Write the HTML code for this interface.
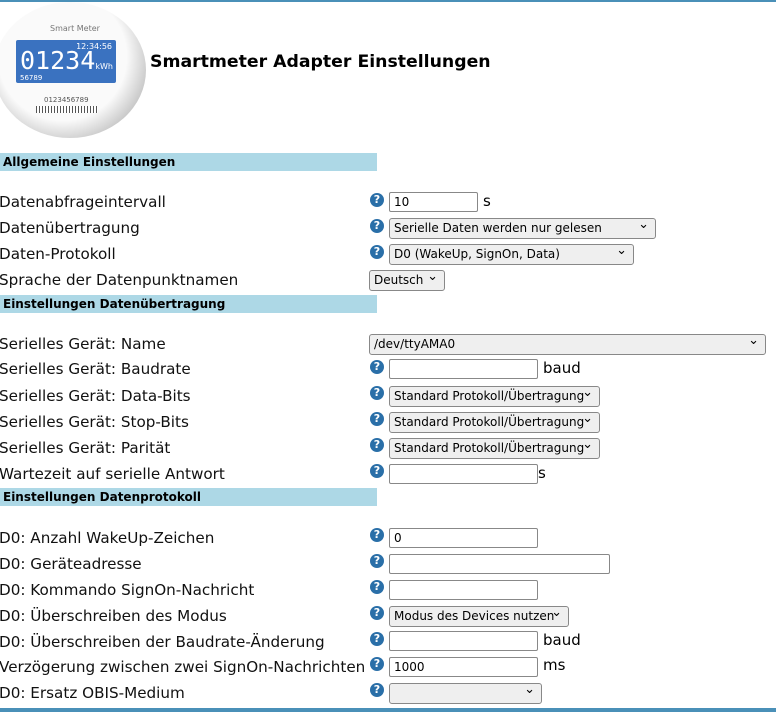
<!DOCTYPE html><html><head><meta charset="utf-8"><style>
body{margin:0;width:776px;height:712px;overflow:hidden;background:#fff;font-family:"DejaVu Sans","Liberation Sans",sans-serif;position:relative}
.t{position:absolute;left:0;right:0;height:2px;background:#4a90b8}
.h{position:absolute;left:0;width:377px;height:18px;background:#add8e6;font-weight:bold;font-size:12px;line-height:18px;padding-left:3px;box-sizing:border-box;color:#000}
.l{position:absolute;left:-1px;font-size:15.2px;color:#111;white-space:nowrap}
.q{position:absolute;left:370px;width:14px;height:14px;border-radius:50%;background:#2a6fa8;color:#fff;font-size:11px;font-weight:bold;text-align:center;line-height:14px}
.i{position:absolute;height:20px;border:1px solid #888;box-sizing:border-box;font-size:12px;line-height:18px;padding-left:4px;background:#fff;border-radius:2px}
.s{position:absolute;height:21px;border:1px solid #888;box-sizing:border-box;font-size:12px;line-height:19px;padding-left:4px;background:#efefef;border-radius:3px;white-space:nowrap}
.s:after{content:"⌄";position:absolute;right:6px;top:-4px;font-size:13px}
.u{position:absolute;font-size:15px}
</style></head><body>
<div class="t" style="top:0"></div><div class="t" style="top:708px;height:4px"></div>
<div style="position:absolute;left:-6px;top:2px;width:152px;height:136px;border-radius:50%;background:radial-gradient(circle at 45% 40%,#fafafa 55%,#c8c8c8 75%,#e8e8e8 85%,#aaa 100%)"></div>
<div style="position:absolute;left:16px;top:40px;width:100px;height:43px;background:#3a72c0;border-radius:2px;color:#fff"><span style="position:absolute;left:4px;top:6px;font-size:25px;font-family:'DejaVu Sans Mono',monospace">01234</span><span style="position:absolute;right:4px;top:2px;font-size:8px">12:34:56</span><span style="position:absolute;left:4px;bottom:1px;font-size:7px">56789</span><span style="position:absolute;right:3px;top:22px;font-size:8px">kWh</span></div>
<div style="position:absolute;left:50px;top:24px;font-size:8px;color:#777">Smart Meter</div>
<div style="position:absolute;left:44px;top:96px;font-size:7px;color:#555">0123456789</div>
<div style="position:absolute;left:36px;top:106px;width:62px;height:7px;background:repeating-linear-gradient(90deg,#555 0 1px,#fff 1px 3px)"></div>
<div style="position:absolute;left:150px;top:52px;font-size:17.3px;font-weight:bold">Smartmeter Adapter Einstellungen</div>
<div class="h" style="top:153px">Allgemeine Einstellungen</div>
<div class="h" style="top:295px">Einstellungen Datenübertragung</div>
<div class="h" style="top:488px">Einstellungen Datenprotokoll</div>

<div class="l" style="top:193px">Datenabfrageintervall</div><div class="q" style="top:193px">?</div><div class="i" style="left:389px;top:192px;width:89px">10</div><div class="u" style="left:483px;top:192px">s</div>
<div class="l" style="top:219px">Datenübertragung</div><div class="q" style="top:219px">?</div><div class="s" style="left:389px;top:218px;width:267px">Serielle Daten werden nur gelesen</div>
<div class="l" style="top:245px">Daten-Protokoll</div><div class="q" style="top:245px">?</div><div class="s" style="left:389px;top:244px;width:245px">D0 (WakeUp, SignOn, Data)</div>
<div class="l" style="top:271px">Sprache der Datenpunktnamen</div><div class="s" style="left:369px;top:270px;width:76px">Deutsch</div>

<div class="l" style="top:335px">Serielles Gerät: Name</div><div class="s" style="left:369px;top:334px;width:397px">/dev/ttyAMA0</div>
<div class="l" style="top:360px">Serielles Gerät: Baudrate</div><div class="q" style="top:360px">?</div><div class="i" style="left:389px;top:359px;width:149px"></div><div class="u" style="left:543px;top:359px">baud</div>
<div class="l" style="top:387px">Serielles Gerät: Data-Bits</div><div class="q" style="top:386px">?</div><div class="s" style="left:389px;top:386px;width:211px">Standard Protokoll/Übertragung</div>
<div class="l" style="top:413px">Serielles Gerät: Stop-Bits</div><div class="q" style="top:412px">?</div><div class="s" style="left:389px;top:412px;width:211px">Standard Protokoll/Übertragung</div>
<div class="l" style="top:439px">Serielles Gerät: Parität</div><div class="q" style="top:438px">?</div><div class="s" style="left:389px;top:438px;width:211px">Standard Protokoll/Übertragung</div>
<div class="l" style="top:465px">Wartezeit auf serielle Antwort</div><div class="q" style="top:464px">?</div><div class="i" style="left:389px;top:464px;width:149px"></div><div class="u" style="left:538px;top:464px">s</div>

<div class="l" style="top:529px">D0: Anzahl WakeUp-Zeichen</div><div class="q" style="top:528px">?</div><div class="i" style="left:389px;top:528px;width:149px">0</div>
<div class="l" style="top:555px">D0: Geräteadresse</div><div class="q" style="top:554px">?</div><div class="i" style="left:389px;top:554px;width:221px"></div>
<div class="l" style="top:581px">D0: Kommando SignOn-Nachricht</div><div class="q" style="top:580px">?</div><div class="i" style="left:389px;top:580px;width:149px"></div>
<div class="l" style="top:607px">D0: Überschreiben des Modus</div><div class="q" style="top:606px">?</div><div class="s" style="left:389px;top:606px;width:180px">Modus des Devices nutzen</div>
<div class="l" style="top:633px">D0: Überschreiben der Baudrate-Änderung</div><div class="q" style="top:632px">?</div><div class="i" style="left:389px;top:631px;width:149px"></div><div class="u" style="left:543px;top:631px">baud</div>
<div class="l" style="top:658px">Verzögerung zwischen zwei SignOn-Nachrichten</div><div class="q" style="top:657px">?</div><div class="i" style="left:389px;top:657px;width:149px">1000</div><div class="u" style="left:543px;top:656px">ms</div>
<div class="l" style="top:684px">D0: Ersatz OBIS-Medium</div><div class="q" style="top:683px">?</div><div class="s" style="left:389px;top:683px;width:153px"></div>
</body></html>
